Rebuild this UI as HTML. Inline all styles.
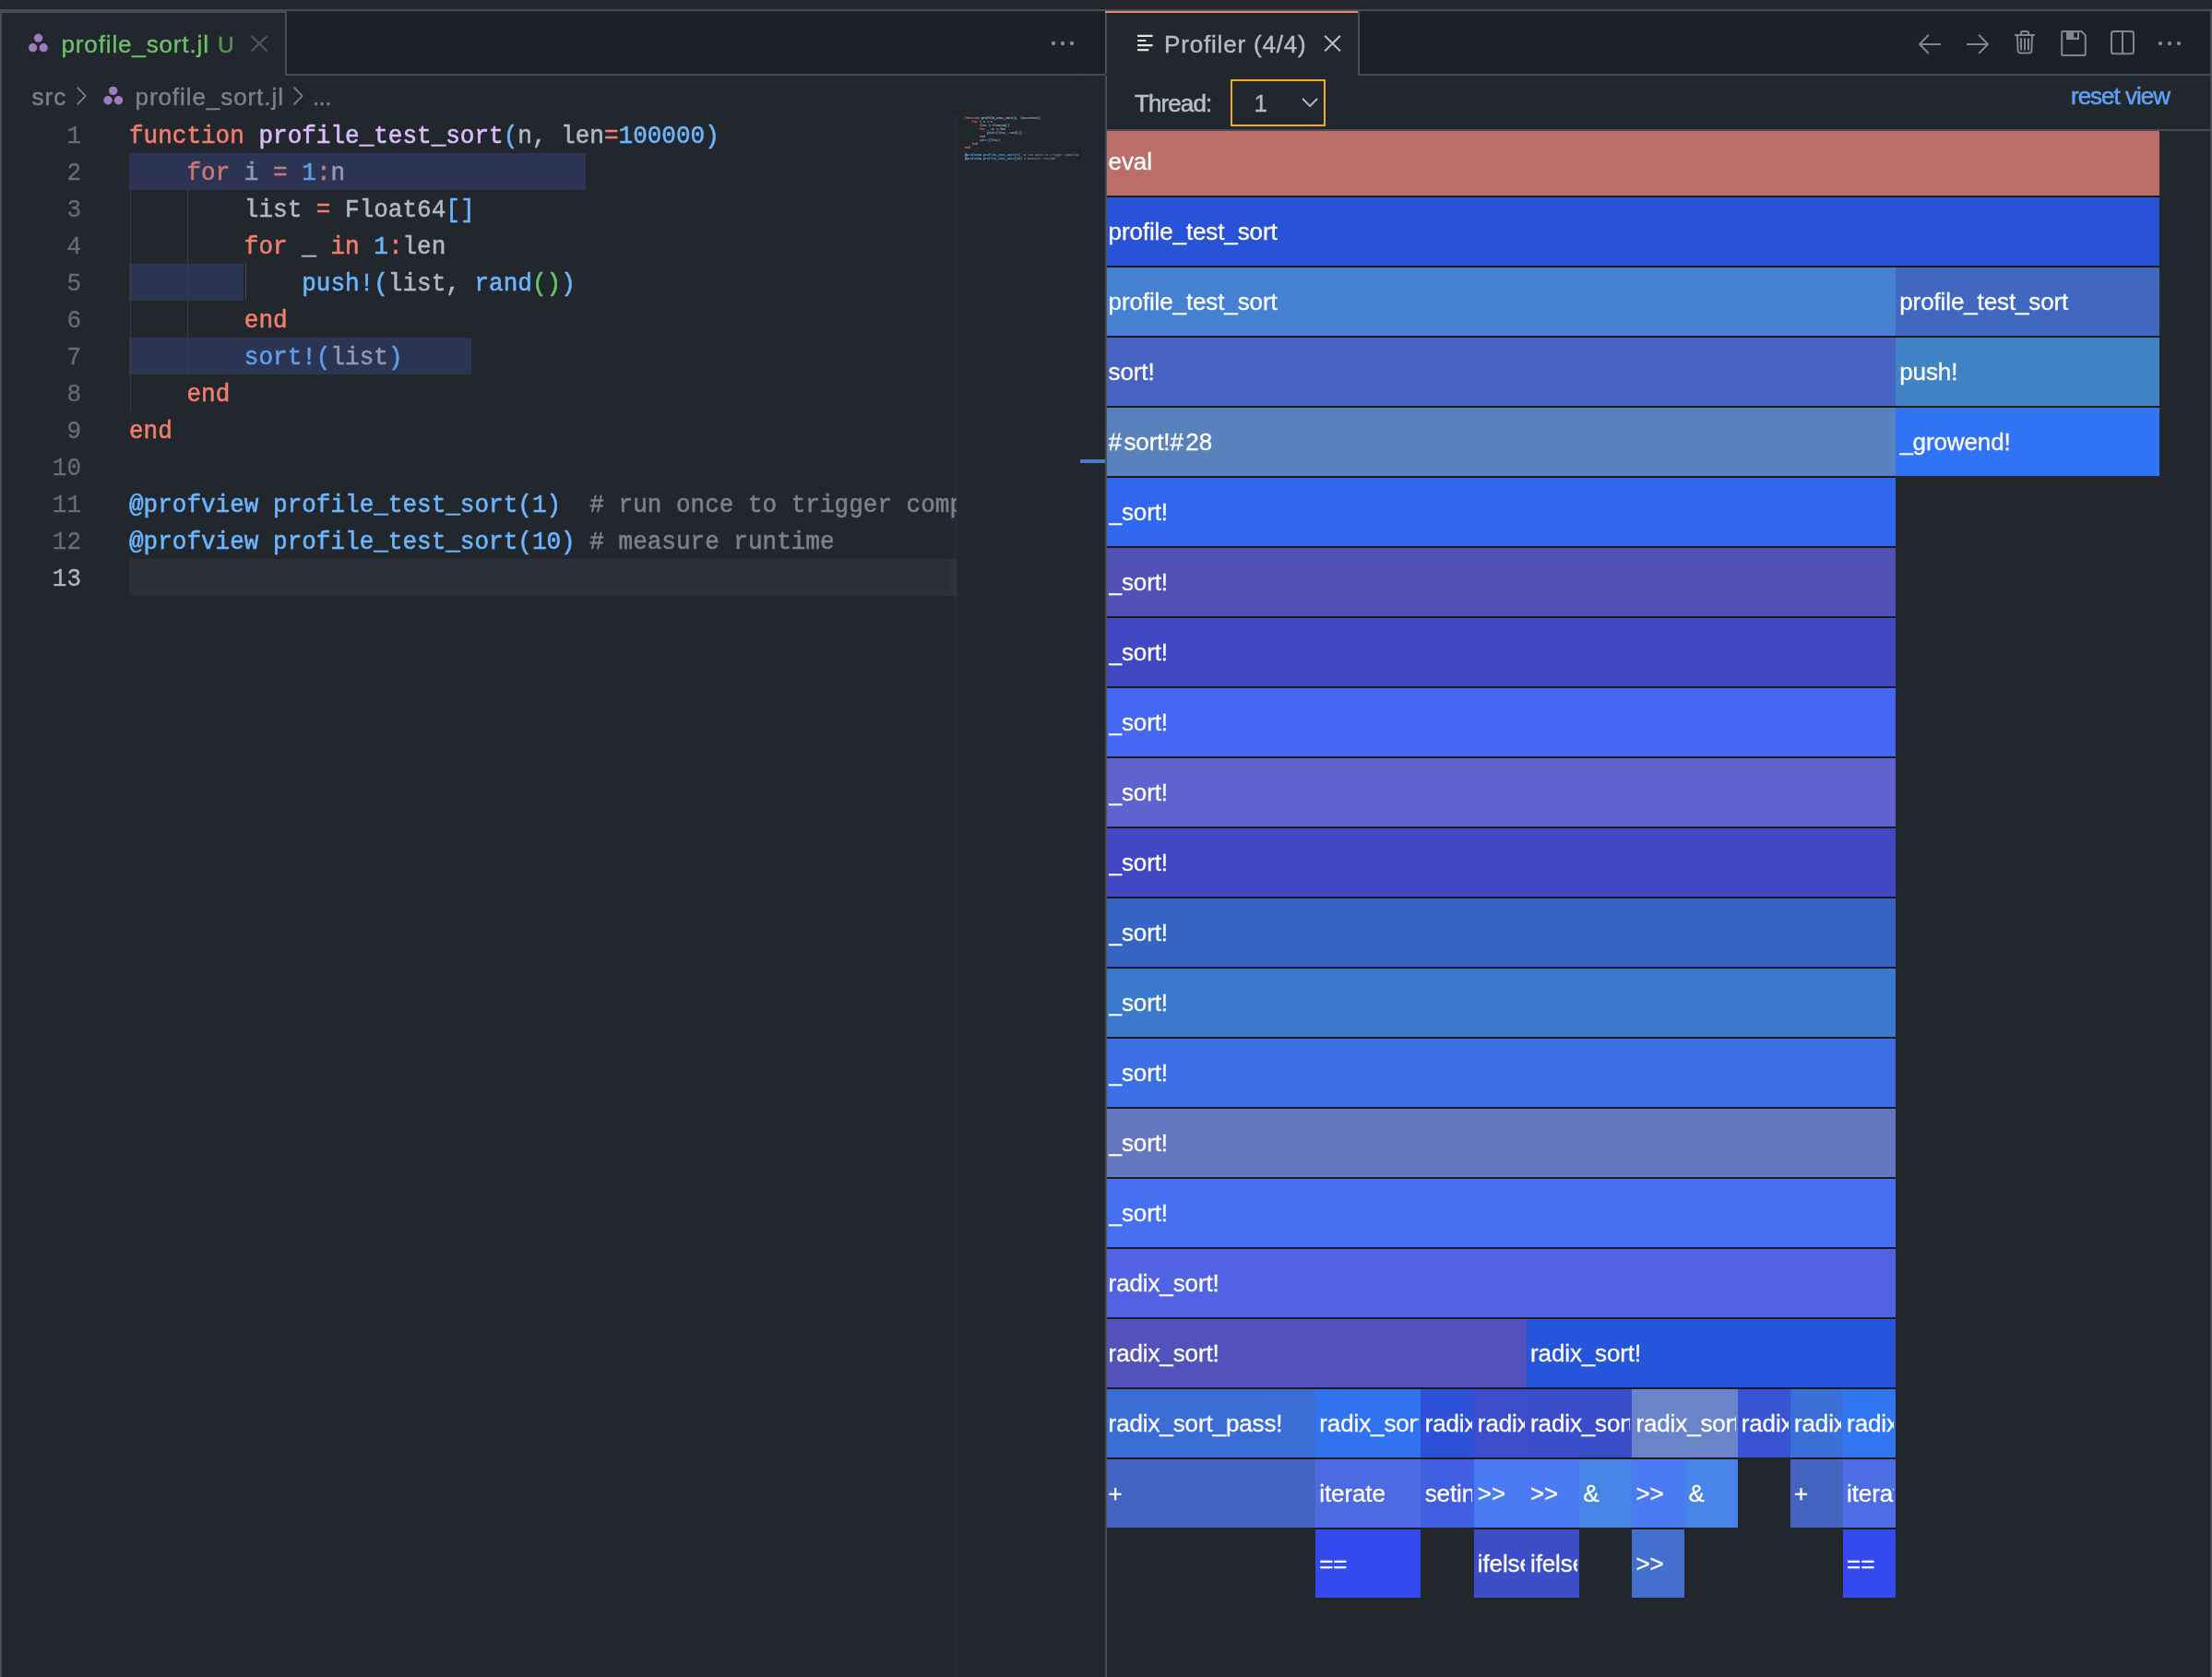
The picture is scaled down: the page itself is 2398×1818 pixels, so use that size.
<!DOCTYPE html>
<html><head><meta charset="utf-8"><title>profile_sort.jl</title>
<style>

html,body{margin:0;padding:0;}
body{width:2398px;height:1818px;background:#22272e;overflow:hidden;position:relative;
 font-family:"Liberation Sans",sans-serif;font-size:26px;color:#adbac7;}
.a{position:absolute;}
.t{position:absolute;white-space:pre;line-height:30px;height:30px;-webkit-text-stroke:0.4px;}
.m{font-family:"Liberation Mono",monospace;font-size:26px;}
.cl{position:absolute;left:140px;height:40px;line-height:40px;white-space:pre;
 font-family:"Liberation Mono",monospace;font-size:26px;color:#adbac7;
 transform:scaleY(1.035);transform-origin:0 26.9px;-webkit-text-stroke:0.55px;}
.ln{position:absolute;left:0;width:88px;text-align:right;height:40px;line-height:40px;
 font-family:"Liberation Mono",monospace;font-size:26px;color:#636e7b;
 transform:scaleY(1.035);transform-origin:0 26.9px;-webkit-text-stroke:0.3px;}
.k{color:#f27e6d}.f{color:#dcbdfb}.n{color:#6cb6ff}.b{color:#6cb6ff}.g{color:#6bc46d}.c{color:#768390}
.kd{color:#c8797b}.nd{color:#5e9fe8}.vd{color:#8f9bae}
.ml{position:absolute;left:0;height:40px;line-height:40px;white-space:pre;
 font-family:"Liberation Mono",monospace;font-size:26px;color:#adbac7;-webkit-text-stroke:1.6px;}
.bar i{font-style:normal;letter-spacing:2.4px;}
.bar{position:absolute;height:74px;overflow:hidden;}
.bar span{position:absolute;left:4.2px;top:0;right:2px;height:74px;line-height:74px;overflow:hidden;
 white-space:pre;color:#fff;font-size:26px;letter-spacing:-0.12px;-webkit-text-stroke:0.3px;}

</style></head><body>
<div class="a" style="left:0;top:0;width:2398px;height:1818px;will-change:transform;overflow:hidden">
<div class="a" style="left:0px;top:0px;width:2398px;height:10px;background:#22272e;"></div>
<div class="a" style="left:0px;top:10px;width:2398px;height:2px;background:#464d57;"></div>
<div class="a" style="left:0px;top:12px;width:2px;height:1806px;background:#464d57;"></div>
<div class="a" style="left:2396px;top:12px;width:2px;height:1806px;background:#484e58;"></div>
<div class="a" style="left:311px;top:12px;width:887px;height:68px;background:#1c2128;"></div>
<div class="a" style="left:311px;top:80px;width:887px;height:2px;background:#464d57;"></div>
<div class="a" style="left:2px;top:12px;width:307px;height:2px;background:#464d57;"></div>
<div class="a" style="left:309px;top:12px;width:2px;height:70px;background:#464d57;"></div>
<svg class="a" style="left:28px;top:32px" width="28" height="28" viewBox="0 0 28 28"><circle cx="13.5" cy="9.2" r="4.6" fill="#9d7cc6"/><circle cx="7.6" cy="19.7" r="4.6" fill="#9d7cc6"/><circle cx="19.2" cy="19.7" r="4.6" fill="#9d7cc6"/></svg>
<div class="t" style="left:66.5px;top:32.991px;color:#6dbf6a;font-size:26px;letter-spacing:0.86px;">profile_sort.jl</div>
<div class="t" style="left:236px;top:33.5108px;color:#5c9558;font-size:24.5px;">U</div>
<svg class="a" style="left:270px;top:36px" width="22" height="22" viewBox="0 0 22 22"><path d="M2.5 3 L19.5 19.5 M19.5 3 L2.5 19.5" stroke="#505866" stroke-width="2" fill="none"/></svg>
<svg class="a" style="left:1136px;top:42px" width="32" height="10" viewBox="0 0 32 10"><circle cx="6" cy="5" r="2.2" fill="#838d9a"/><circle cx="16" cy="5" r="2.2" fill="#838d9a"/><circle cx="26" cy="5" r="2.2" fill="#838d9a"/></svg>
<div class="t" style="left:34.5px;top:89.991px;color:#768390;font-size:26px;letter-spacing:1px;">src</div>
<svg class="a" style="left:80px;top:91px" width="16" height="26" viewBox="0 0 16 26"><path d="M3.6 3.6 L12.7 13 L3.6 22.4" stroke="#7a8693" stroke-width="1.6" fill="none"/></svg>
<svg class="a" style="left:109px;top:90px" width="28" height="28" viewBox="0 0 28 28"><circle cx="13.7" cy="8.4" r="4.7" fill="#9d7cc6"/><circle cx="8" cy="18.7" r="4.7" fill="#9d7cc6"/><circle cx="19.5" cy="18.7" r="4.7" fill="#9d7cc6"/></svg>
<div class="t" style="left:146.5px;top:89.991px;color:#768390;font-size:26px;letter-spacing:0.93px;">profile_sort.jl</div>
<svg class="a" style="left:315px;top:91px" width="16" height="26" viewBox="0 0 16 26"><path d="M3.6 3.6 L12.7 13 L3.6 22.4" stroke="#7a8693" stroke-width="1.6" fill="none"/></svg>
<div class="t" style="left:339px;top:89.991px;color:#768390;font-size:26px;letter-spacing:-0.6px;">...</div>
<div class="a" style="left:140px;top:606px;width:897px;height:40px;background:#2b3038;"></div>
<div class="a" style="left:140px;top:166px;width:495px;height:40px;background:#2b3452;"></div>
<div class="a" style="left:140px;top:286px;width:124px;height:40px;background:#2b3452;"></div>
<div class="a" style="left:140px;top:366px;width:371px;height:40px;background:#2b3452;"></div>
<div class="a" style="left:141px;top:206px;width:1px;height:240px;background:#373e47;"></div>
<div class="a" style="left:203px;top:206px;width:1px;height:200px;background:#373e47;"></div>
<div class="a" style="left:265.5px;top:286px;width:1px;height:40px;background:#444b57;"></div>
<div class="a" style="left:0;top:0;width:1037px;height:1818px;overflow:hidden">
<div class="ln" style="top:128px">1</div>
<div class="cl" style="top:128px"><span class="k">function</span> <span class="f">profile_test_sort</span><span class="b">(</span>n, len<span class="k">=</span><span class="n">100000</span><span class="b">)</span></div>
<div class="ln" style="top:168px">2</div>
<div class="cl" style="top:168px">    <span class="kd">for</span> <span class="vd">i</span> <span class="kd">=</span> <span class="nd">1</span><span class="kd">:</span><span class="vd">n</span></div>
<div class="ln" style="top:208px">3</div>
<div class="cl" style="top:208px">        list <span class="k">=</span> Float64<span class="b">[]</span></div>
<div class="ln" style="top:248px">4</div>
<div class="cl" style="top:248px">        <span class="k">for</span> _ <span class="k">in</span> <span class="n">1</span><span class="k">:</span>len</div>
<div class="ln" style="top:288px">5</div>
<div class="cl" style="top:288px">            <span class="n">push!</span><span class="b">(</span>list, <span class="n">rand</span><span class="g">()</span><span class="b">)</span></div>
<div class="ln" style="top:328px">6</div>
<div class="cl" style="top:328px">        <span class="k">end</span></div>
<div class="ln" style="top:368px">7</div>
<div class="cl" style="top:368px">        <span class="nd">sort!(</span><span class="vd">list</span><span class="nd">)</span></div>
<div class="ln" style="top:408px">8</div>
<div class="cl" style="top:408px">    <span class="k">end</span></div>
<div class="ln" style="top:448px">9</div>
<div class="cl" style="top:448px"><span class="k">end</span></div>
<div class="ln" style="top:488px">10</div>
<div class="ln" style="top:528px">11</div>
<div class="cl" style="top:528px"><span class="n">@profview profile_test_sort</span><span class="b">(</span><span class="n">1</span><span class="b">)</span>  <span class="c"># run once to trigger compilation</span></div>
<div class="ln" style="top:568px">12</div>
<div class="cl" style="top:568px"><span class="n">@profview profile_test_sort</span><span class="b">(</span><span class="n">10</span><span class="b">)</span> <span class="c"># measure runtime</span></div>
<div class="ln" style="top:608px;color:#adbac7">13</div>
</div>
<div class="a" style="left:1028px;top:126px;width:10px;height:1692px;background:linear-gradient(to right,rgba(150,170,200,0),rgba(150,170,200,0.05));"></div>
<div class="a mm" style="left:1046px;top:125.6px;width:970px;height:560px;overflow:hidden;transform:scale(0.1282,0.1);transform-origin:0 0;opacity:.78">
<div class="ml" style="top:0px"><span class="k">function</span> <span class="f">profile_test_sort</span><span class="b">(</span>n, len<span class="k">=</span><span class="n">100000</span><span class="b">)</span></div>
<div class="ml" style="top:40px">    <span class="k">for</span> <span class="v">i</span> <span class="k">=</span> <span class="n">1</span><span class="k">:</span><span class="v">n</span></div>
<div class="ml" style="top:80px">        list <span class="k">=</span> Float64<span class="b">[]</span></div>
<div class="ml" style="top:120px">        <span class="k">for</span> _ <span class="k">in</span> <span class="n">1</span><span class="k">:</span>len</div>
<div class="ml" style="top:160px">            <span class="n">push!</span><span class="b">(</span>list, <span class="n">rand</span><span class="g">()</span><span class="b">)</span></div>
<div class="ml" style="top:200px">        <span class="k">end</span></div>
<div class="ml" style="top:240px">        <span class="n">sort!(</span><span class="v">list</span><span class="n">)</span></div>
<div class="ml" style="top:280px">    <span class="k">end</span></div>
<div class="ml" style="top:320px"><span class="k">end</span></div>
<div class="ml" style="top:400px"><span class="n">@profview profile_test_sort</span><span class="b">(</span><span class="n">1</span><span class="b">)</span>  <span class="c"># run once to trigger compilation</span></div>
<div class="ml" style="top:440px"><span class="n">@profview profile_test_sort</span><span class="b">(</span><span class="n">10</span><span class="b">)</span> <span class="c"># measure runtime</span></div>
</div>
<div class="a" style="left:1170px;top:82px;width:1px;height:1736px;background:#1e2228;"></div>
<div class="a" style="left:1171px;top:498px;width:27px;height:4px;background:#4a7cc4;"></div>
<div class="a" style="left:1198px;top:14px;width:2px;height:66px;background:#464d57;"></div>
<div class="a" style="left:1198px;top:82px;width:2px;height:1736px;background:#464d57;"></div>
<div class="a" style="left:1474px;top:12px;width:922px;height:68px;background:#1c2128;"></div>
<div class="a" style="left:1474px;top:80px;width:922px;height:2px;background:#464d57;"></div>
<div class="a" style="left:1198px;top:12px;width:274px;height:2px;background:#f38a66;"></div>
<div class="a" style="left:1472px;top:12px;width:2px;height:70px;background:#464d57;"></div>
<svg class="a" style="left:1232px;top:36px" width="20" height="22" viewBox="0 0 20 22"><path d="M1.1 2.9 H17.6 M1.1 8 H10.4 M1.1 13.1 H17.6 M1.1 18.1 H13.3" stroke="#e6e7e4" stroke-width="2.1" fill="none"/></svg>
<div class="t" style="left:1262px;top:33.191px;color:#b2becb;font-size:26px;letter-spacing:0.82px;">Profiler (4/4)</div>
<svg class="a" style="left:1434px;top:36px" width="22" height="22" viewBox="0 0 22 22"><path d="M2.2 2.7 L18.9 19.4 M18.9 2.7 L2.2 19.4" stroke="#b9c5d1" stroke-width="2" fill="none"/></svg>
<svg class="a" style="left:2074px;top:30px" width="300" height="36" viewBox="2074 30 300 36" fill="none" stroke="#7d8896" stroke-width="2">
<path d="M2104 47.9 H2081.4 M2090.8 37.8 L2081.1 47.9 L2090.8 58"/>
<path d="M2132 47.9 H2154.6 M2145.2 37.8 L2154.9 47.9 L2145.2 58"/>
<path d="M2184 38 H2206 M2191 38 V35.6 Q2191 34 2192.6 34 H2197.4 Q2199 34 2199 35.6 V38 M2187 38.5 L2187.6 55 Q2187.8 57.4 2190 57.4 H2200 Q2202.2 57.4 2202.4 55 L2203 38.5 M2191 41.5 V54.5 M2195 41.5 V54.5 M2199 41.5 V54.5"/>
<path d="M2235.2 35 Q2235.2 34 2236.2 34 H2256.5 L2260.8 38.3 V59 Q2260.8 60 2259.8 60 H2236.2 Q2235.2 60 2235.2 59 Z"/>
<path d="M2240 34 H2254 V43 H2240 Z M2248.2 35.3 V40.8 H2252 V35.3 Z" fill="#7d8896" stroke="none" fill-rule="evenodd"/>
<rect x="2289" y="34" width="24" height="24.2" rx="2.5"/><path d="M2301 34 V58"/>
<g fill="#838d9a" stroke="none"><circle cx="2342" cy="47.1" r="2.2"/><circle cx="2352" cy="47.1" r="2.2"/><circle cx="2362" cy="47.1" r="2.2"/></g>
</svg>
<div class="t" style="left:1230px;top:96.991px;color:#b4c0cc;font-size:26px;letter-spacing:-0.9px;-webkit-text-stroke:0.5px;">Thread:</div>
<div class="a" style="left:1334px;top:86px;width:99px;height:47px;border:2px solid #f0aa2e;"></div>
<div class="t" style="left:1359.5px;top:96.991px;color:#adbac7;font-size:26px;">1</div>
<svg class="a" style="left:1408px;top:102px" width="24" height="18" viewBox="0 0 24 18"><path d="M4.1 5 L12.1 13 L20.1 5" stroke="#b4c0cc" stroke-width="1.8" fill="none"/></svg>
<div class="t" style="left:2245px;top:89.291px;color:#5ea2f8;font-size:26px;letter-spacing:-1px;-webkit-text-stroke:0.5px;">reset view</div>
<div class="a" style="left:1200px;top:142px;width:1196px;height:1676px;overflow:hidden">
<div class="a" style="left:-2.60px;top:70px;width:1143.60px;height:2px;background:#1c1c1f"></div>
<div class="a" style="left:-2.60px;top:146px;width:857.70px;height:2px;background:#1c1c1f"></div>
<div class="a" style="left:855.10px;top:146px;width:285.90px;height:2px;background:#1c1c1f"></div>
<div class="a" style="left:-2.60px;top:222px;width:857.70px;height:2px;background:#1c1c1f"></div>
<div class="a" style="left:855.10px;top:222px;width:285.90px;height:2px;background:#1c1c1f"></div>
<div class="a" style="left:-2.60px;top:298px;width:857.70px;height:2px;background:#1c1c1f"></div>
<div class="a" style="left:855.10px;top:298px;width:285.90px;height:2px;background:#1c1c1f"></div>
<div class="a" style="left:-2.60px;top:374px;width:857.70px;height:2px;background:#1c1c1f"></div>
<div class="a" style="left:-2.60px;top:450px;width:857.70px;height:2px;background:#1c1c1f"></div>
<div class="a" style="left:-2.60px;top:526px;width:857.70px;height:2px;background:#1c1c1f"></div>
<div class="a" style="left:-2.60px;top:602px;width:857.70px;height:2px;background:#1c1c1f"></div>
<div class="a" style="left:-2.60px;top:678px;width:857.70px;height:2px;background:#1c1c1f"></div>
<div class="a" style="left:-2.60px;top:754px;width:857.70px;height:2px;background:#1c1c1f"></div>
<div class="a" style="left:-2.60px;top:830px;width:857.70px;height:2px;background:#1c1c1f"></div>
<div class="a" style="left:-2.60px;top:906px;width:857.70px;height:2px;background:#1c1c1f"></div>
<div class="a" style="left:-2.60px;top:982px;width:857.70px;height:2px;background:#1c1c1f"></div>
<div class="a" style="left:-2.60px;top:1058px;width:857.70px;height:2px;background:#1c1c1f"></div>
<div class="a" style="left:-2.60px;top:1134px;width:857.70px;height:2px;background:#1c1c1f"></div>
<div class="a" style="left:-2.60px;top:1210px;width:857.70px;height:2px;background:#1c1c1f"></div>
<div class="a" style="left:-2.60px;top:1286px;width:457.44px;height:2px;background:#1c1c1f"></div>
<div class="a" style="left:454.84px;top:1286px;width:400.26px;height:2px;background:#1c1c1f"></div>
<div class="a" style="left:-2.60px;top:1362px;width:228.72px;height:2px;background:#1c1c1f"></div>
<div class="a" style="left:226.12px;top:1362px;width:114.36px;height:2px;background:#1c1c1f"></div>
<div class="a" style="left:340.48px;top:1362px;width:57.18px;height:2px;background:#1c1c1f"></div>
<div class="a" style="left:397.66px;top:1362px;width:57.18px;height:2px;background:#1c1c1f"></div>
<div class="a" style="left:454.84px;top:1362px;width:114.36px;height:2px;background:#1c1c1f"></div>
<div class="a" style="left:569.20px;top:1362px;width:114.36px;height:2px;background:#1c1c1f"></div>
<div class="a" style="left:683.56px;top:1362px;width:57.18px;height:2px;background:#1c1c1f"></div>
<div class="a" style="left:740.74px;top:1362px;width:57.18px;height:2px;background:#1c1c1f"></div>
<div class="a" style="left:797.92px;top:1362px;width:57.18px;height:2px;background:#1c1c1f"></div>
<div class="a" style="left:-2.60px;top:1438px;width:228.72px;height:2px;background:#1c1c1f"></div>
<div class="a" style="left:226.12px;top:1438px;width:114.36px;height:2px;background:#1c1c1f"></div>
<div class="a" style="left:340.48px;top:1438px;width:57.18px;height:2px;background:#1c1c1f"></div>
<div class="a" style="left:397.66px;top:1438px;width:57.18px;height:2px;background:#1c1c1f"></div>
<div class="a" style="left:454.84px;top:1438px;width:57.18px;height:2px;background:#1c1c1f"></div>
<div class="a" style="left:512.02px;top:1438px;width:57.18px;height:2px;background:#1c1c1f"></div>
<div class="a" style="left:569.20px;top:1438px;width:57.18px;height:2px;background:#1c1c1f"></div>
<div class="a" style="left:626.38px;top:1438px;width:57.18px;height:2px;background:#1c1c1f"></div>
<div class="a" style="left:740.74px;top:1438px;width:57.18px;height:2px;background:#1c1c1f"></div>
<div class="a" style="left:797.92px;top:1438px;width:57.18px;height:2px;background:#1c1c1f"></div>
<div class="a" style="left:226.12px;top:1514px;width:114.36px;height:2px;background:#1c1c1f"></div>
<div class="a" style="left:397.66px;top:1514px;width:57.18px;height:2px;background:#1c1c1f"></div>
<div class="a" style="left:454.84px;top:1514px;width:57.18px;height:2px;background:#1c1c1f"></div>
<div class="a" style="left:569.20px;top:1514px;width:57.18px;height:2px;background:#1c1c1f"></div>
<div class="a" style="left:797.92px;top:1514px;width:57.18px;height:2px;background:#1c1c1f"></div>
<div class="bar" style="left:-2.60px;top:-4px;width:1143.60px;background:#bb6e68"><span>eval</span></div>
<div class="bar" style="left:-2.60px;top:72px;width:1143.60px;background:#2853d9"><span>profile_test_sort</span></div>
<div class="bar" style="left:-2.60px;top:148px;width:857.70px;background:#4680d1"><span>profile_test_sort</span></div>
<div class="bar" style="left:855.10px;top:148px;width:285.90px;background:#4068c0"><span>profile_test_sort</span></div>
<div class="bar" style="left:-2.60px;top:224px;width:857.70px;background:#4763c2"><span>sort!</span></div>
<div class="bar" style="left:855.10px;top:224px;width:285.90px;background:#3f83c5"><span>push!</span></div>
<div class="bar" style="left:-2.60px;top:300px;width:857.70px;background:#5981bb"><span><i>#</i>sort!<i>#</i>28</span></div>
<div class="bar" style="left:855.10px;top:300px;width:285.90px;background:#3173f7"><span>_growend!</span></div>
<div class="bar" style="left:-2.60px;top:376px;width:857.70px;background:#3067ee"><span>_sort!</span></div>
<div class="bar" style="left:-2.60px;top:452px;width:857.70px;background:#5251b8"><span>_sort!</span></div>
<div class="bar" style="left:-2.60px;top:528px;width:857.70px;background:#4248c3"><span>_sort!</span></div>
<div class="bar" style="left:-2.60px;top:604px;width:857.70px;background:#4467f4"><span>_sort!</span></div>
<div class="bar" style="left:-2.60px;top:680px;width:857.70px;background:#5e63d0"><span>_sort!</span></div>
<div class="bar" style="left:-2.60px;top:756px;width:857.70px;background:#4248c3"><span>_sort!</span></div>
<div class="bar" style="left:-2.60px;top:832px;width:857.70px;background:#3664c5"><span>_sort!</span></div>
<div class="bar" style="left:-2.60px;top:908px;width:857.70px;background:#3a79cc"><span>_sort!</span></div>
<div class="bar" style="left:-2.60px;top:984px;width:857.70px;background:#3c6ee6"><span>_sort!</span></div>
<div class="bar" style="left:-2.60px;top:1060px;width:857.70px;background:#6677c2"><span>_sort!</span></div>
<div class="bar" style="left:-2.60px;top:1136px;width:857.70px;background:#4570f2"><span>_sort!</span></div>
<div class="bar" style="left:-2.60px;top:1212px;width:857.70px;background:#5162e2"><span>radix_sort!</span></div>
<div class="bar" style="left:-2.60px;top:1288px;width:457.44px;background:#5252bd"><span>radix_sort!</span></div>
<div class="bar" style="left:454.84px;top:1288px;width:400.26px;background:#2555db"><span>radix_sort!</span></div>
<div class="bar" style="left:-2.60px;top:1364px;width:228.72px;background:#3a6ed6"><span>radix_sort_pass!</span></div>
<div class="bar" style="left:226.12px;top:1364px;width:114.36px;background:#3172ee"><span>radix_sort_pass!</span></div>
<div class="bar" style="left:340.48px;top:1364px;width:57.18px;background:#2c51d6"><span>radix_sort_pass!</span></div>
<div class="bar" style="left:397.66px;top:1364px;width:57.18px;background:#3c4ec9"><span>radix_sort_pass!</span></div>
<div class="bar" style="left:454.84px;top:1364px;width:114.36px;background:#3b4ec9"><span>radix_sort_pass!</span></div>
<div class="bar" style="left:569.20px;top:1364px;width:114.36px;background:#6984c8"><span>radix_sort_pass!</span></div>
<div class="bar" style="left:683.56px;top:1364px;width:57.18px;background:#3853d3"><span>radix_sort_pass!</span></div>
<div class="bar" style="left:740.74px;top:1364px;width:57.18px;background:#396fd6"><span>radix_sort_pass!</span></div>
<div class="bar" style="left:797.92px;top:1364px;width:57.18px;background:#3275f0"><span>radix_sort_pass!</span></div>
<div class="bar" style="left:-2.60px;top:1440px;width:228.72px;background:#4463c1"><span>+</span></div>
<div class="bar" style="left:226.12px;top:1440px;width:114.36px;background:#4c6be2"><span>iterate</span></div>
<div class="bar" style="left:340.48px;top:1440px;width:57.18px;background:#3f5fe0"><span>setindex!</span></div>
<div class="bar" style="left:397.66px;top:1440px;width:57.18px;background:#4b7af5"><span>&gt;&gt;</span></div>
<div class="bar" style="left:454.84px;top:1440px;width:57.18px;background:#4b7af5"><span>&gt;&gt;</span></div>
<div class="bar" style="left:512.02px;top:1440px;width:57.18px;background:#4784e8"><span>&amp;</span></div>
<div class="bar" style="left:569.20px;top:1440px;width:57.18px;background:#4b7af5"><span>&gt;&gt;</span></div>
<div class="bar" style="left:626.38px;top:1440px;width:57.18px;background:#4784e8"><span>&amp;</span></div>
<div class="bar" style="left:740.74px;top:1440px;width:57.18px;background:#4463c1"><span>+</span></div>
<div class="bar" style="left:797.92px;top:1440px;width:57.18px;background:#4c6de3"><span>iterate</span></div>
<div class="bar" style="left:226.12px;top:1516px;width:114.36px;background:#334bee"><span>==</span></div>
<div class="bar" style="left:397.66px;top:1516px;width:57.18px;background:#3c4dc8"><span>ifelse</span></div>
<div class="bar" style="left:454.84px;top:1516px;width:57.18px;background:#3c4dc8"><span>ifelse</span></div>
<div class="bar" style="left:569.20px;top:1516px;width:57.18px;background:#4370cf"><span>&gt;&gt;</span></div>
<div class="bar" style="left:797.92px;top:1516px;width:57.18px;background:#334bee"><span>==</span></div>
</div>
<div class="a" style="left:1200px;top:140px;width:1196px;height:2px;background:#464d57;"></div>
</div>
</body></html>
